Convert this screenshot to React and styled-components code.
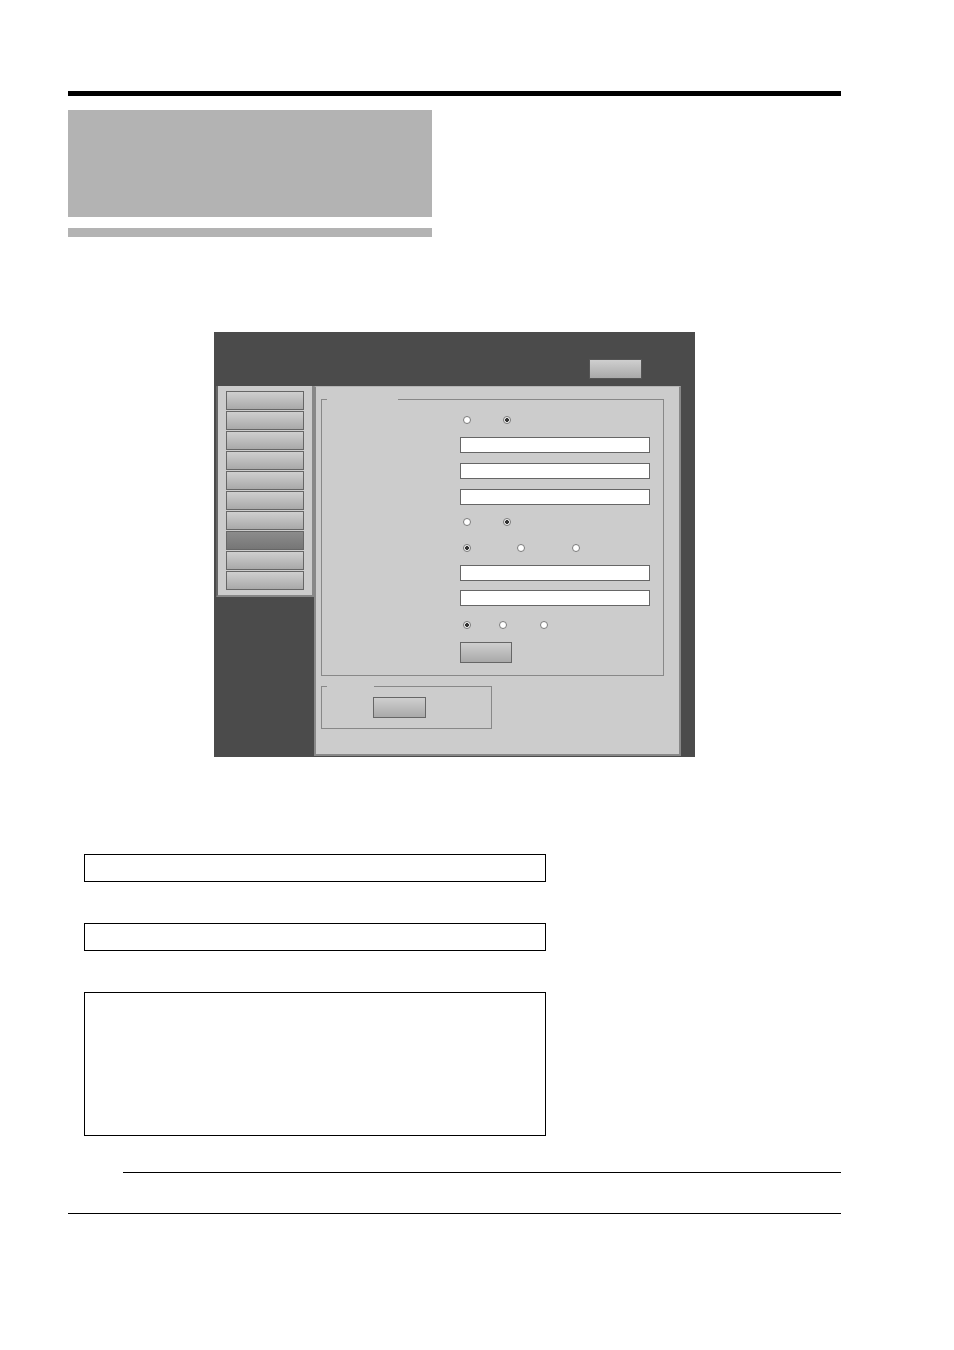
import { createGlobalStyle, styled } from "styled-components"

const GlobalStyle = createGlobalStyle`
  html, body {
    margin: 0;
    padding: 0;
    background: #ffffff;
    font-family: "Liberation Sans", Arial, sans-serif;
  }
`

const sideButtons = [0, 1, 2, 3, 4, 5, 6, 7, 8, 9]
const activeSide = 7

function Radio({ checked, ml }) {
  return <RadioDot $checked={checked ? 1 : 0} $ml={ml} />
}

function App() {
  return (
    <>
      <GlobalStyle />
      <Page>
        <TopRule />
        <TitleBlock />
        <TitleUnderbar />

        <Screen>
          <ScreenHeader>
            <GradButton $w={53} $h={20} $edge="#555" />
          </ScreenHeader>
          <ScreenBody>
            <SideMenu>
              {sideButtons.map(i => (
                <SideButton key={i} $active={i === activeSide ? 1 : 0} />
              ))}
            </SideMenu>
            <MainPanel>
              <Group $w={343} $h={277}>
                <Legend $w={71} />
                <Controls>
                  <RadioRow $mt={16}>
                    <Radio ml={0} />
                    <Radio ml={32} checked />
                  </RadioRow>
                  <TextField $mt={13} />
                  <TextField $mt={10} />
                  <TextField $mt={10} />
                  <RadioRow $mt={13}>
                    <Radio ml={0} />
                    <Radio ml={32} checked />
                  </RadioRow>
                  <RadioRow $mt={18}>
                    <Radio ml={0} checked />
                    <Radio ml={46} />
                    <Radio ml={47} />
                  </RadioRow>
                  <TextField $mt={13} />
                  <TextField $mt={9} />
                  <RadioRow $mt={15}>
                    <Radio ml={0} checked />
                    <Radio ml={28} />
                    <Radio ml={33} />
                  </RadioRow>
                  <ButtonSlot $mt={13} $pl={0}>
                    <GradButton $w={52} $h={21} $edge="#666" />
                  </ButtonSlot>
                </Controls>
              </Group>
              <Group $w={171} $h={43} $mt={10}>
                <Legend $w={47} />
                <ButtonSlot $mt={10} $pl={51}>
                  <GradButton $w={53} $h={21} $edge="#666" />
                </ButtonSlot>
              </Group>
            </MainPanel>
          </ScreenBody>
        </Screen>

        <NoteBox $h={28} $mt={97} />
        <NoteBox $h={28} $mt={41} />
        <NoteBox $h={144} $mt={41} />

        <NoteRule />
        <FooterRule />
      </Page>
    </>
  )
}

export default App

const Page = styled.div`
  width: 954px;
  height: 1350px;
  padding-left: 68px;
  box-sizing: border-box;
  display: flex;
  flex-direction: column;
  align-items: flex-start;
`

const TopRule = styled.div`
  width: 773px;
  height: 5px;
  margin-top: 91px;
  background: #000000;
`

const TitleBlock = styled.div`
  width: 364px;
  height: 107px;
  margin-top: 14px;
  background: #b3b3b3;
`

const TitleUnderbar = styled.div`
  width: 364px;
  height: 9px;
  margin-top: 11px;
  background: #b3b3b3;
`

const Screen = styled.div`
  width: 481px;
  height: 425px;
  margin-top: 95px;
  margin-left: 146px;
  background: #4b4b4b;
  display: flex;
  flex-direction: column;
`

const ScreenHeader = styled.div`
  height: 54px;
  box-sizing: border-box;
  padding: 27px 53px 0 0;
  display: flex;
  justify-content: flex-end;
  align-items: flex-start;
`

const GradButton = styled.div`
  width: ${p => p.$w}px;
  height: ${p => p.$h}px;
  box-sizing: border-box;
  border: 1px solid ${p => p.$edge};
  background: linear-gradient(#cfcfcf, #a9a9a9);
`

const ScreenBody = styled.div`
  flex: 1;
  display: flex;
  align-items: flex-start;
  padding: 0 14px 0 2px;
`

const SideMenu = styled.div`
  width: 98px;
  flex-shrink: 0;
  box-sizing: border-box;
  padding: 5px 8px 5px 8px;
  background: #cccccc;
  border-left: 2px solid #666666;
  border-right: 2px solid #888888;
  border-bottom: 2px solid #888888;
  display: flex;
  flex-direction: column;
  gap: 1px;
`

const SideButton = styled.div`
  height: 19px;
  box-sizing: border-box;
  border: 1px solid #666666;
  background: ${p =>
    p.$active
      ? "linear-gradient(#8c8c8c, #767676)"
      : "linear-gradient(#cfcfcf, #a9a9a9)"};
`

const MainPanel = styled.div`
  width: 367px;
  height: 370px;
  flex-shrink: 0;
  box-sizing: border-box;
  padding: 12px 0 0 5px;
  background: #cccccc;
  border: 2px solid #888888;
  border-top: 1px solid #b5b5b5;
  display: flex;
  flex-direction: column;
  align-items: flex-start;
`

const Group = styled.fieldset`
  width: ${p => p.$w}px;
  height: ${p => p.$h}px;
  margin: ${p => p.$mt || 0}px 0 0 0;
  padding: 0;
  box-sizing: border-box;
  border: 1px solid #888888;
  min-inline-size: 0;
`

const Legend = styled.legend`
  width: ${p => p.$w}px;
  height: 0;
  margin-left: 5px;
  padding: 0;
  font-size: 0;
  line-height: 0;
`

const Controls = styled.div`
  padding-left: 138px;
  display: flex;
  flex-direction: column;
  align-items: flex-start;
`

const RadioRow = styled.div`
  display: flex;
  align-items: center;
  margin-top: ${p => p.$mt}px;
  padding-left: 3px;
`

const RadioDot = styled.span`
  display: block;
  width: 8px;
  height: 8px;
  box-sizing: border-box;
  margin-left: ${p => p.$ml}px;
  border-radius: 50%;
  border: 1px solid #7a7a7a;
  background: ${p =>
    p.$checked
      ? "radial-gradient(circle, #333333 0 1.6px, #f4f4f4 2.2px)"
      : "#ffffff"};
`

const TextField = styled.div`
  width: 190px;
  height: 16px;
  margin-top: ${p => p.$mt}px;
  box-sizing: border-box;
  border: 1px solid #666666;
  background: #ffffff;
`

const ButtonSlot = styled.div`
  margin-top: ${p => p.$mt}px;
  padding-left: ${p => p.$pl}px;
`

const NoteBox = styled.div`
  width: 462px;
  height: ${p => p.$h}px;
  margin-top: ${p => p.$mt}px;
  margin-left: 16px;
  box-sizing: border-box;
  border: 1px solid #000000;
`

const NoteRule = styled.div`
  width: 718px;
  height: 1px;
  margin-top: 36px;
  margin-left: 55px;
  background: #000000;
`

const FooterRule = styled.div`
  width: 773px;
  height: 1px;
  margin-top: 40px;
  background: #000000;
`
